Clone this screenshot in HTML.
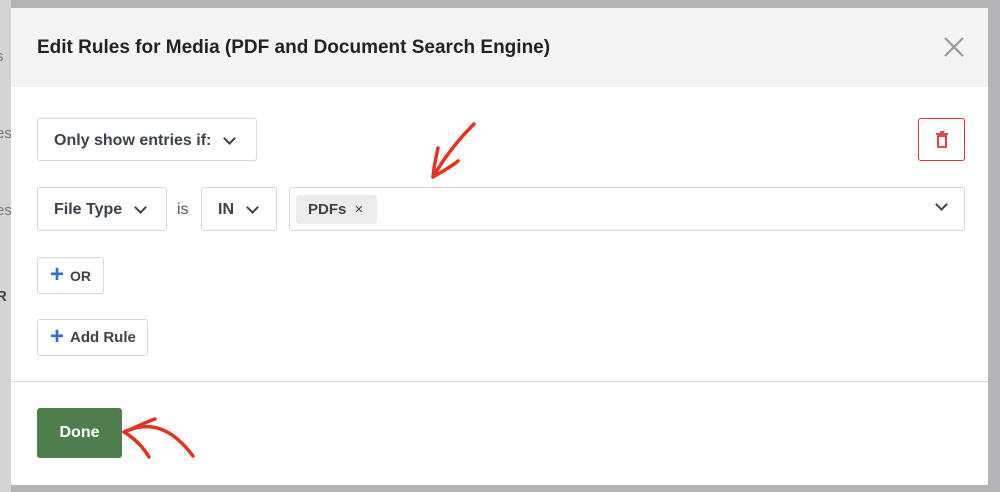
<!DOCTYPE html>
<html><head><style>
*{box-sizing:border-box;margin:0;padding:0}
body{width:1000px;height:492px;background:#b4b4b6;font-family:"Liberation Sans",sans-serif;position:relative;overflow:hidden;color:#3c434a}
.bgl{position:absolute;left:0;top:0;width:11px;height:492px;background:#d4d4d6}
.bgl span{position:absolute;left:-4px;font-size:15px;color:#777}
.modal{position:absolute;left:11px;top:8px;width:977px;height:477px;background:#fff;border-radius:2px}
.hdr{height:79px;background:#f4f4f4;display:flex;align-items:center;padding-left:26px;font-size:19px;font-weight:bold;color:#1d2327}
.x{position:absolute;right:22px;top:27px;width:24px;height:24px}
.box{position:absolute;border:1px solid #d6d6d6;border-radius:3px;background:#fff;font-size:16px;font-weight:bold;color:#3c434a;display:flex;align-items:center}
.chev{display:inline-block;width:9px;height:9px;border-right:2px solid #3c434a;border-bottom:2px solid #3c434a;transform:rotate(45deg);margin-top:-5px}
.plus{color:#2f6fd8;font-size:24px;font-weight:bold;margin-right:6px;line-height:1;margin-top:-2px}
</style></head><body>
<div class="bgl"><span style="top:48px">s</span><span style="top:125px">es</span><span style="top:202px">es</span><span style="top:288px;font-weight:bold;color:#444">R</span></div>
<div class="modal">
<div class="hdr">Edit Rules for Media (PDF and Document Search Engine)</div>
<svg class="x" viewBox="0 0 24 24"><path d="M3 3L21 21M21 3L3 21" stroke="#9a9a9a" stroke-width="2.2"/></svg>
<div class="box" style="left:26px;top:110px;width:220px;height:43px;padding-left:16px;padding-top:2px">Only show entries if:<span class="chev" style="margin-left:14px"></span></div>
<div class="box" style="left:907px;top:110px;width:47px;height:43px;border-color:#d63638;justify-content:center">
<svg width="14" height="18" viewBox="0 0 14 18"><path d="M1 3H13M5 1H9M3 5V16H11V5Z" stroke="#d63638" stroke-width="1.8" fill="none"/></svg></div>
<div class="box" style="left:26px;top:179px;width:130px;height:44px;padding-left:16px;padding-top:2px">File Type<span class="chev" style="margin-left:14px"></span></div>
<div style="position:absolute;left:166px;top:193px;font-size:16px;color:#50575e">is</div>
<div class="box" style="left:190px;top:179px;width:76px;height:44px;padding-left:16px;padding-top:2px">IN<span class="chev" style="margin-left:14px"></span></div>
<div class="box" style="left:278px;top:179px;width:676px;height:44px;padding-left:6px">
<span style="background:#ececec;border-radius:3px;padding:6px 14px 6px 12px;font-size:15px">PDFs <span style="font-weight:normal;margin-left:4px">×</span></span>
<span class="chev" style="position:absolute;right:18px;top:17px"></span></div>
<div class="box" style="left:26px;top:249px;width:67px;height:37px;padding-left:12px;font-size:14px"><span class="plus">+</span>OR</div>
<div class="box" style="left:26px;top:311px;width:111px;height:37px;padding-left:12px;font-size:15px"><span class="plus">+</span>Add Rule</div>
<div style="position:absolute;left:0;top:373px;width:977px;height:1px;background:#dcdcdc"></div>
<div style="position:absolute;left:26px;top:400px;width:85px;height:50px;background:#4f7d4b;border-radius:3px;color:#fff;font-weight:bold;font-size:16px;display:flex;align-items:center;justify-content:center">Done</div>
</div>
<svg style="position:absolute;left:0;top:0" width="1000" height="492" viewBox="0 0 1000 492">
<g stroke="#e8321e" stroke-width="3.5" fill="none" stroke-linecap="round">
<path d="M474 124C458 140 444 158 433 177M433 177C434 166 436 157 438 148M433 177C443 171 451 167 458 161"/>
<path d="M124 432C150 420 172 428 193 456M124 432C134 438 143 447 149 457M124 432C134 428 146 422 155 419"/>
</g></svg>
</body></html>
